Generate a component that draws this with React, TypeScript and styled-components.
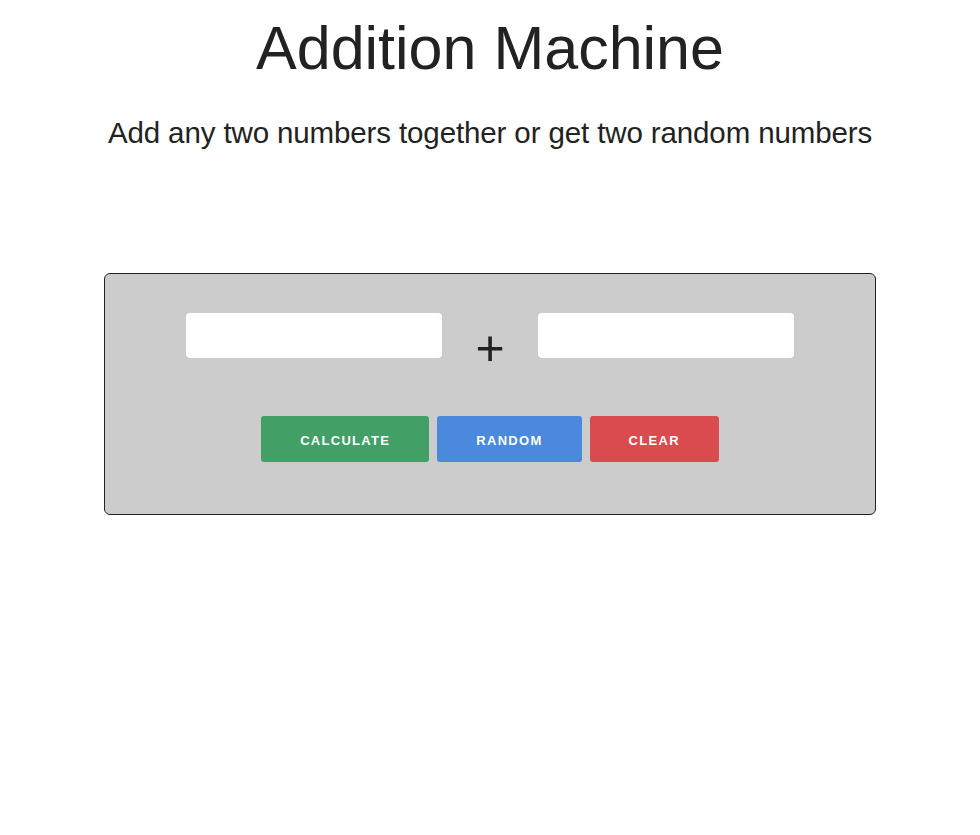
import React from "react";
import styled, { createGlobalStyle } from "styled-components";

const Global = createGlobalStyle`
  html, body { margin: 0; padding: 0; background: #fff; }
  body { font-family: "Liberation Sans", Arial, Helvetica, sans-serif; color: #222; }
`;

const Page = styled.main`
  display: flex;
  flex-direction: column;
  align-items: center;
  padding-top: 18px;
`;

const Title = styled.h1`
  margin: 0;
  font-size: 61px;
  line-height: 1;
  font-weight: 400;
  color: #222;
`;

const Subtitle = styled.h2`
  margin: 39px 0 0;
  font-size: 29.5px;
  line-height: 1;
  font-weight: 400;
  color: #222;
  letter-spacing: -0.12px;
`;

const Panel = styled.section`
  box-sizing: border-box;
  margin-top: 125px;
  width: 772px;
  background: #cccccc;
  border: 1px solid #222;
  border-radius: 6px;
  padding: 39px 0 52px;
  display: flex;
  flex-direction: column;
  align-items: center;
`;

const InputRow = styled.div`
  display: flex;
  align-items: flex-start;
  justify-content: center;
  height: 45px;
`;

const NumberInput = styled.input`
  box-sizing: border-box;
  width: 256px;
  height: 45px;
  border: none;
  border-radius: 4px;
  background: #fff;
  outline: none;
  font-size: 20px;
  padding: 0 12px;
  font-family: inherit;
`;

const Plus = styled.span`
  width: 96px;
  height: 45px;
  text-align: center;
  font-size: 50px;
  line-height: 45px;
  color: #222;
  transform: translateY(13px);
`;

const ButtonRow = styled.div`
  display: flex;
  justify-content: center;
  gap: 8px;
  margin-top: 58px;
`;

const Btn = styled.button<{ $bg: string }>`
  box-sizing: border-box;
  height: 46px;
  padding: 3px 39px 0;
  border: none;
  border-radius: 3px;
  background: ${(p) => p.$bg};
  color: #fff;
  font-family: "Liberation Sans", Arial, sans-serif;
  font-weight: 700;
  font-size: 13px;
  letter-spacing: 1.3px;
  text-transform: uppercase;
  cursor: pointer;
`;

export default function App() {
  return (
    <>
      <Global />
      <Page>
        <Title>Addition Machine</Title>
        <Subtitle>Add any two numbers together or get two random numbers</Subtitle>
        <Panel>
          <InputRow>
            <NumberInput type="text" />
            <Plus>+</Plus>
            <NumberInput type="text" />
          </InputRow>
          <ButtonRow>
            <Btn $bg="#42a066">Calculate</Btn>
            <Btn $bg="#4a89db">Random</Btn>
            <Btn $bg="#d94b4f">Clear</Btn>
          </ButtonRow>
        </Panel>
      </Page>
    </>
  );
}
